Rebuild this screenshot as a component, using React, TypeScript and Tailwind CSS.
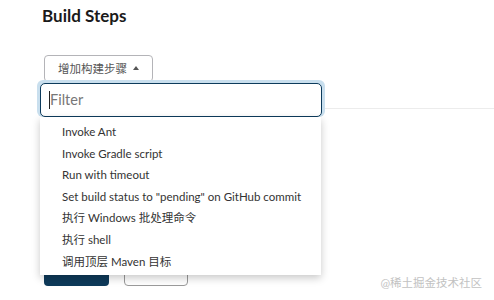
import React from 'react';

const steps = [
  'Invoke Ant',
  'Invoke Gradle script',
  'Run with timeout',
  'Set build status to "pending" on GitHub commit',
  '执行 Windows 批处理命令',
  '执行 shell',
  '调用顶层 Maven 目标',
];

const font = { fontFamily: 'Lato, "Noto Sans CJK SC", sans-serif' };

export default function App() {
  return (
    <div
      className="relative w-[494px] h-[300px] overflow-hidden bg-white text-[#333]"
      style={font}
    >
      <div className="pl-[42px] pt-[5px]">
        <h2 className="text-[17px] font-bold leading-[22px] text-[#1a1a1a]">Build Steps</h2>

        {/* Add step dropdown */}
        <div className="relative mt-[28px] ml-[2px] w-[109px]">
          <button className="flex h-[27px] w-[109px] items-center justify-center gap-[6px] rounded-[4px] border border-[#b4b4b8] bg-white text-[11.5px] text-[#555]">
            增加构建步骤
            <span className="mt-[-1px] h-0 w-0 border-x-[3.5px] border-b-[4px] border-x-transparent border-b-[#555]" />
          </button>

          <div className="absolute left-[-7px] top-[25px] z-10 w-[288px]">
            <div className="rounded-[6px] bg-[#c9dfee] p-[3px] pb-0">
              <div className="flex h-[34px] items-center rounded-[5px] border-[1.5px] border-[#0d3b5c] bg-white pl-[8px]">
                <span className="h-[18px] w-px bg-[#222]" />
                <span className="text-[14.5px] text-[#777]">Filter</span>
              </div>
            </div>
            <ul className="ml-[3px] w-[281px] bg-white pt-[4px] pb-[3px] shadow-[0_3px_8px_rgba(0,0,0,0.22)]">
              {steps.map((s) => (
                <li key={s} className="h-[21.6px] pl-[22px] text-[11.5px] leading-[21.6px] text-[#333]">
                  {s}
                </li>
              ))}
            </ul>
          </div>
        </div>
      </div>

      <div className="mt-[26px] ml-[322px] border-t border-[#ececec]" />

      <div className="mt-[153px] flex gap-[15px] pl-[44px]">
        <div className="h-[24px] w-[65px] rounded-[4px] bg-[#0e3a5a]" />
        <div className="h-[24px] w-[64px] rounded-[4px] border border-[#9a9a9a] bg-white" />
      </div>

      <div className="absolute bottom-[9px] right-[12px] text-[11.5px] text-[#c2c2c2]">@稀土掘金技术社区</div>
    </div>
  );
}
